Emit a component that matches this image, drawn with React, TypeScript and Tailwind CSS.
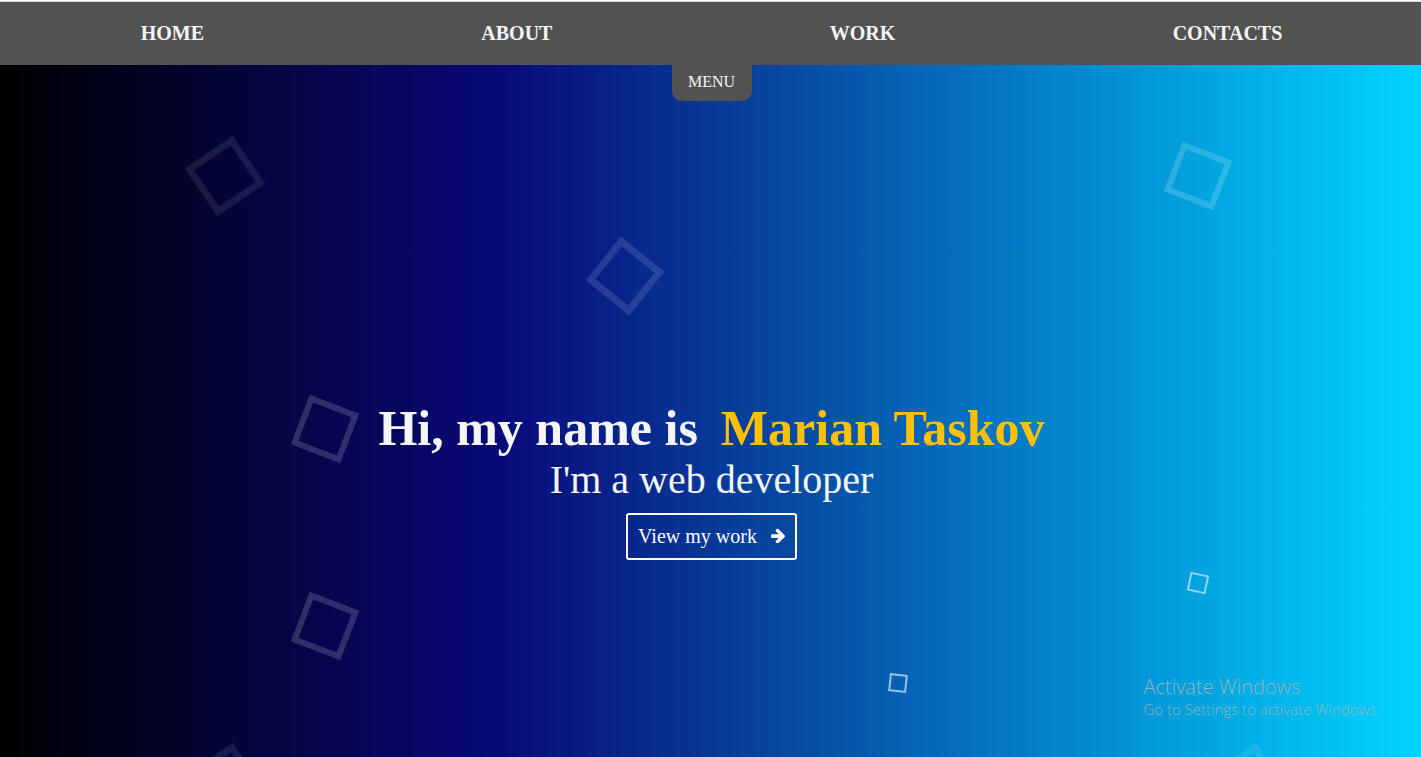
import React from 'react';

const links = ['Home', 'About', 'Work', 'Contacts'];

type Square = { x: number; y: number; look: string };

// x is a share of the section's width, y a distance from its top
const squares: Square[] = [
  { x: 15.85, y: 111, look: 'size-[58px] -rotate-34 border-[7px] border-white/9' },
  { x: 44, y: 211, look: 'size-[56px] rotate-39 border-[7px] border-white/12' },
  { x: 84.3, y: 111, look: 'size-[53px] rotate-21 border-[6px] border-white/17' },
  { x: 22.87, y: 364, look: 'size-[53px] rotate-21 border-[6px] border-white/17' },
  { x: 22.87, y: 561, look: 'size-[53px] rotate-21 border-[6px] border-white/17' },
  { x: 63.2, y: 618, look: 'size-[18px] rotate-6 border-2 border-white/60' },
  { x: 84.3, y: 518, look: 'size-[19px] rotate-12 border-2 border-white/55' },
  { x: 15.85, y: 718, look: 'size-[58px] -rotate-34 border-[7px] border-white/9' },
  { x: 87.8, y: 718, look: 'size-[58px] -rotate-34 border-[7px] border-white/9' },
];

function FloatingSquare({ x, y, look }: Square) {
  return (
    <div
      aria-hidden="true"
      className={`absolute -translate-x-1/2 -translate-y-1/2 ${look}`}
      style={{ left: `${x}%`, top: y }}
    />
  );
}

function ArrowRight() {
  return (
    <svg viewBox="0 120 1472 1558" className="h-[15px] w-[14px]" fill="currentColor" aria-hidden="true">
      <path d="M1472 960q0 54-37 91l-651 651q-39 37-91 37-51 0-90-37l-75-75q-38-38-38-91t38-91l293-293H117q-52 0-84.500-37.500T0 1024V896q0-53 32.500-90.500T117 768h704L528 474q-38-36-38-90t38-90l75-75q38-38 90-38 53 0 91 38l651 651q37 35 37 90z" />
    </svg>
  );
}

export default function App() {
  return (
    <div className="flex min-h-screen flex-col border-t border-white font-['Liberation_Serif',serif] text-[#f5f5f5]">
      <header className="border-t border-[#d5d5d5] bg-[#525252]">
        <nav className="flex h-[63px] items-center justify-around pb-0.5 pl-0.5 text-xl font-bold uppercase">
          {links.map((link) => (
            <a key={link} href={`#${link.toLowerCase()}`}>
              {link}
            </a>
          ))}
        </nav>
      </header>

      <main className="relative flex flex-1 flex-col items-center overflow-hidden bg-[linear-gradient(90deg,#000000_0%,#090979_35%,#00d4ff_100%)] pl-0.5">
        <button type="button" className="h-9 w-20 rounded-b-[10px] bg-[#525252] pb-0.5 text-base">
          MENU
        </button>

        {squares.map((square, i) => (
          <FloatingSquare key={i} {...square} />
        ))}

        <section className="relative mt-[298px] flex flex-col items-center pb-24 text-center">
          <h1 className="flex flex-wrap justify-center gap-x-[23px] text-[50px] leading-[58px] font-bold">
            <span>Hi, my name is</span>
            <span className="text-[#ffc107]">Marian Taskov</span>
          </h1>
          <p className="text-[40px] leading-[46px]">I'm a web developer</p>
          <a
            href="#work"
            className="mt-[10px] flex h-[47px] items-center gap-[14px] rounded-[3px] border-2 border-white px-[10px] pb-0.5 text-xl text-white"
          >
            View my work
            <ArrowRight />
          </a>
        </section>

        <aside className="absolute right-[41px] bottom-[38px] font-['Open_Sans',sans-serif] font-light text-[#8fb4c0]">
          <p className="text-xl leading-6">Activate Windows</p>
          <p className="text-[15px] leading-5">Go to Settings to activate Windows.</p>
        </aside>
      </main>
    </div>
  );
}
